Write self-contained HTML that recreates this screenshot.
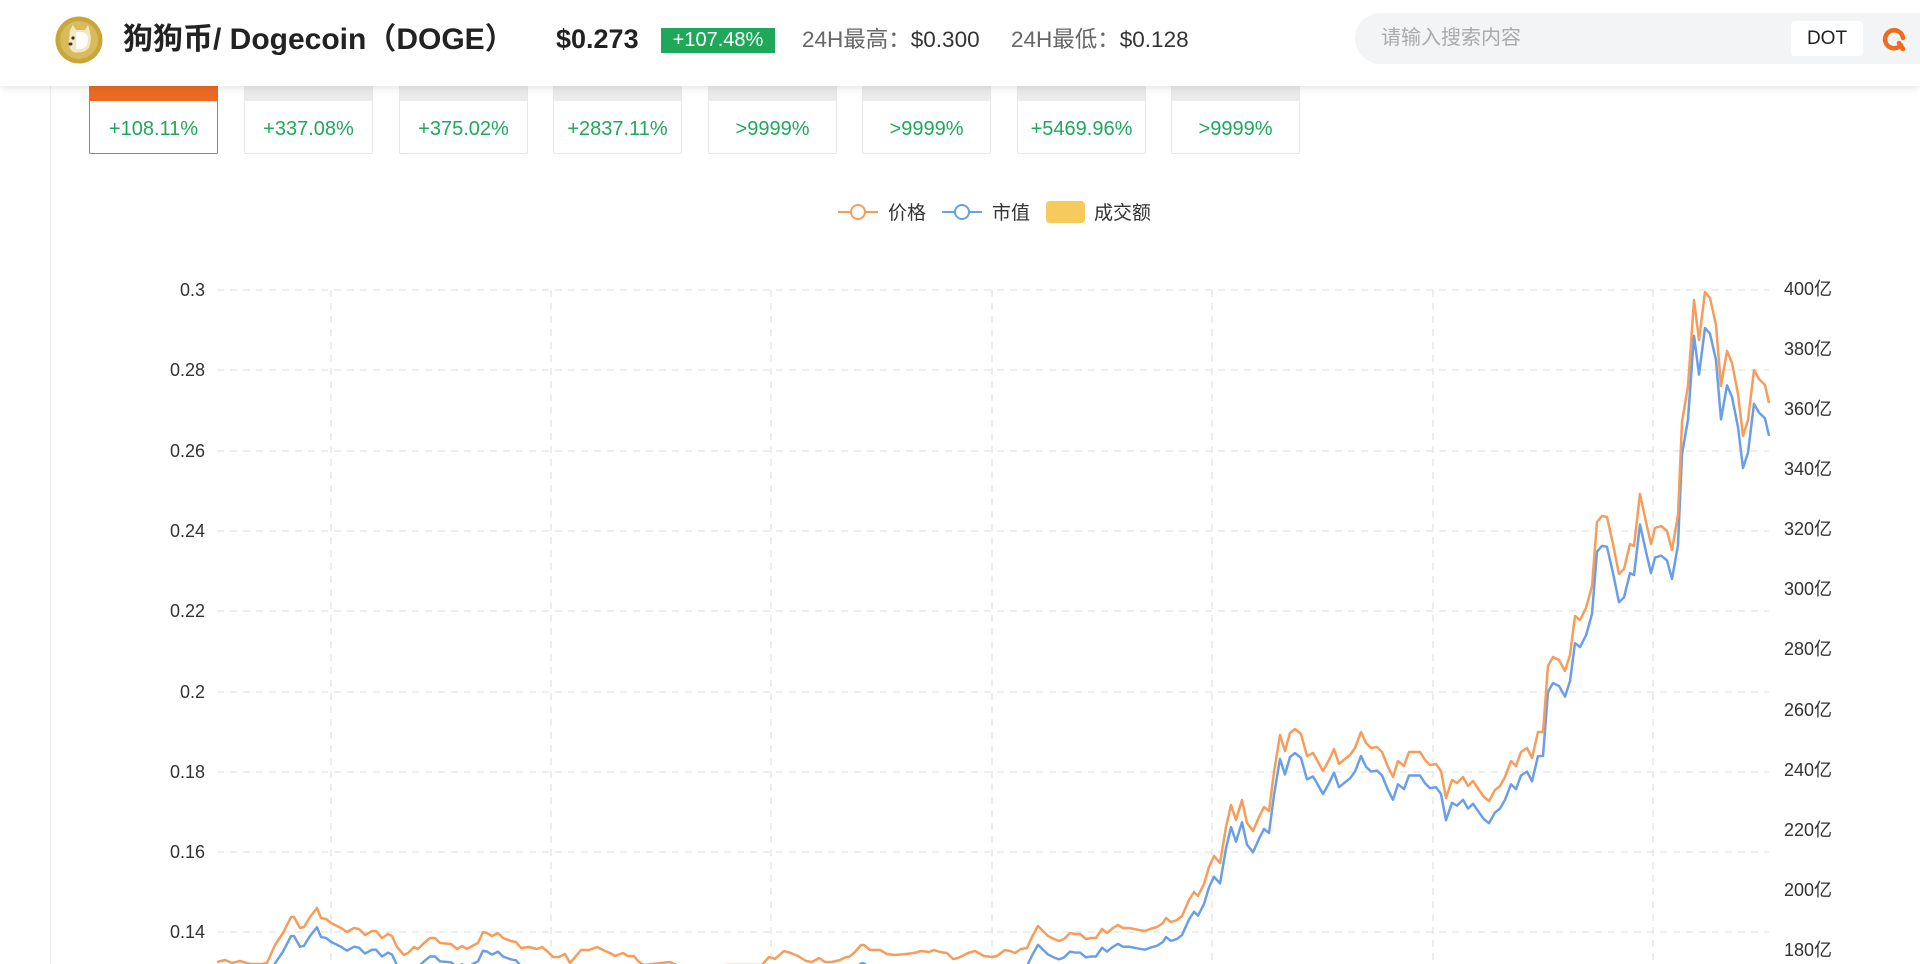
<!DOCTYPE html>
<html><head><meta charset="utf-8">
<style>
*{margin:0;padding:0;box-sizing:border-box}
body{width:1920px;height:964px;overflow:hidden;background:#fff;font-family:"Liberation Sans","Noto Sans CJK SC",sans-serif;position:relative}
.hdr{position:absolute;left:0;top:0;width:1920px;height:86px;background:#fff;box-shadow:0 3px 8px rgba(0,0,0,.09);z-index:5}
.abs{position:absolute;white-space:nowrap}
.card{position:absolute;top:60px;width:129px;height:94px;border:1px solid #e8e8e8;background:#fff;border-radius:2px}
.card .top{height:40px;background:#ebebeb}
.card .v{position:absolute;left:0;right:0;top:54px;text-align:center;font-size:20px;color:#1fa85a;line-height:28px}
.card.act{border-color:#ee6a22}
.card.act .top{background:#ee6a22}
</style></head><body>
<div class="abs" style="left:50px;top:80px;width:1px;height:884px;background:#ececec"></div>

<div class="card act" style="left:89px"><div class="top"></div><div class="v">+108.11%</div></div>
<div class="card" style="left:244px"><div class="top"></div><div class="v">+337.08%</div></div>
<div class="card" style="left:399px"><div class="top"></div><div class="v">+375.02%</div></div>
<div class="card" style="left:553px"><div class="top"></div><div class="v">+2837.11%</div></div>
<div class="card" style="left:708px"><div class="top"></div><div class="v">&gt;9999%</div></div>
<div class="card" style="left:862px"><div class="top"></div><div class="v">&gt;9999%</div></div>
<div class="card" style="left:1017px"><div class="top"></div><div class="v">+5469.96%</div></div>
<div class="card" style="left:1171px"><div class="top"></div><div class="v">&gt;9999%</div></div>

<div class="hdr">
  <svg class="abs" style="left:55px;top:16px" width="48" height="48" viewBox="0 0 48 48">
    <circle cx="24" cy="24" r="23.5" fill="#c9a53a"/>
    <circle cx="24" cy="24" r="19" fill="#d9bb5c"/>
    <path d="M15 14 L18 9 L21 14 L30 14 L33 9 L35 16 Q37 24 34 32 Q28 38 18 36 Q13 32 14 24 Z" fill="#f1e6c6"/>
    <path d="M21 16 H28 Q34 18 33 25 Q32 33 25 33 H21 Z" fill="#fff" opacity=".85"/>
    <circle cx="18" cy="22" r="1.6" fill="#333"/>
    <ellipse cx="15.5" cy="28" rx="2" ry="1.5" fill="#333"/>
  </svg>
  <div class="abs" style="left:123px;top:22px;font-size:30px;font-weight:bold;color:#222;line-height:36px">狗狗币/ Dogecoin（DOGE）</div>
  <div class="abs" style="left:556px;top:21px;font-size:27px;font-weight:bold;color:#222;line-height:36px">$0.273</div>
  <div class="abs" style="left:661px;top:28px;width:114px;height:25px;background:#1fa85a;color:#fff;font-size:20px;line-height:25px;text-align:center">+107.48%</div>
  <div class="abs" style="left:802px;top:26px;font-size:22.5px;color:#666;line-height:28px">24H最高：<span style="color:#333">$0.300</span></div>
  <div class="abs" style="left:1011px;top:26px;font-size:22.5px;color:#666;line-height:28px">24H最低：<span style="color:#333">$0.128</span></div>
  <div class="abs" style="left:1355px;top:13px;width:600px;height:51px;background:#f3f4f6;border-radius:26px"></div>
  <div class="abs" style="left:1381px;top:24px;font-size:20px;color:#aaa;line-height:28px">请输入搜索内容</div>
  <div class="abs" style="left:1791px;top:21px;width:72px;height:35px;background:#fff;border-radius:4px;font-size:19px;color:#222;line-height:35px;text-align:center">DOT</div>
  <svg class="abs" style="left:1882px;top:26px" width="28" height="26" viewBox="0 0 28 26">
    <path d="M19 19 A9 9 0 1 1 21 12" fill="none" stroke="#f26b1d" stroke-width="4.5" stroke-linecap="round"/>
    <path d="M17 17 L21 23" stroke="#f26b1d" stroke-width="4.5" stroke-linecap="round"/>
  </svg>
</div>

<svg class="abs" style="left:0;top:0" width="1920" height="964">
  <g font-family="Liberation Sans, Noto Sans CJK SC, sans-serif" font-size="19" fill="#333">
    <line x1="838" y1="212" x2="878" y2="212" stroke="#f79d5c" stroke-width="2"/>
    <circle cx="858" cy="212" r="7" fill="#fff" stroke="#f79d5c" stroke-width="2"/>
    <text x="888" y="219">价格</text>
    <line x1="942" y1="212" x2="982" y2="212" stroke="#6a9ee8" stroke-width="2"/>
    <circle cx="962" cy="212" r="7" fill="#fff" stroke="#6a9ee8" stroke-width="2"/>
    <text x="992" y="219">市值</text>
    <rect x="1046" y="201" width="39" height="22" rx="4" fill="#f7cb5b"/>
    <text x="1094" y="219">成交额</text>
  </g>
  <g stroke="#e3e3e3" stroke-width="1.3" stroke-dasharray="7,6">
    <line x1="217" y1="290" x2="1769" y2="290"/>
    <line x1="217" y1="370" x2="1769" y2="370"/>
    <line x1="217" y1="451" x2="1769" y2="451"/>
    <line x1="217" y1="531" x2="1769" y2="531"/>
    <line x1="217" y1="611" x2="1769" y2="611"/>
    <line x1="217" y1="692" x2="1769" y2="692"/>
    <line x1="217" y1="772" x2="1769" y2="772"/>
    <line x1="217" y1="852" x2="1769" y2="852"/>
    <line x1="217" y1="932" x2="1769" y2="932"/>
    <line x1="331" y1="290" x2="331" y2="964"/>
    <line x1="551" y1="290" x2="551" y2="964"/>
    <line x1="771" y1="290" x2="771" y2="964"/>
    <line x1="992" y1="290" x2="992" y2="964"/>
    <line x1="1212" y1="290" x2="1212" y2="964"/>
    <line x1="1433" y1="290" x2="1433" y2="964"/>
    <line x1="1653" y1="290" x2="1653" y2="964"/>
  </g>
  <g font-family="Liberation Sans, Noto Sans CJK SC, sans-serif" font-size="18" fill="#333" text-anchor="end">
    <text x="205" y="296">0.3</text>
    <text x="205" y="376">0.28</text>
    <text x="205" y="457">0.26</text>
    <text x="205" y="537">0.24</text>
    <text x="205" y="617">0.22</text>
    <text x="205" y="698">0.2</text>
    <text x="205" y="778">0.18</text>
    <text x="205" y="858">0.16</text>
    <text x="205" y="938">0.14</text>
  </g>
  <g font-family="Liberation Sans, Noto Sans CJK SC, sans-serif" font-size="18" fill="#333">
    <text x="1784" y="295">400亿</text>
    <text x="1784" y="355">380亿</text>
    <text x="1784" y="415">360亿</text>
    <text x="1784" y="475">340亿</text>
    <text x="1784" y="535">320亿</text>
    <text x="1784" y="595">300亿</text>
    <text x="1784" y="655">280亿</text>
    <text x="1784" y="716">260亿</text>
    <text x="1784" y="776">240亿</text>
    <text x="1784" y="836">220亿</text>
    <text x="1784" y="896">200亿</text>
    <text x="1784" y="956">180亿</text>
  </g>
  <defs>
    <polyline id="ln" fill="none" points="217,962 225,960 232,963 240,961 250,964 262,964 267,963 275,945 283,933 291,917 294,917 300,928 304,927 310,917 317,908 321,918 326,919 331,923 341,928 347,932 354,928 359,929 365,935 372,931 376,931 382,938 388,934 392,936 397,947 404,955 408,953 414,947 418,949 424,943 430,938 435,938 440,943 451,944 457,949 462,946 467,949 474,945 478,943 483,932 487,933 492,936 498,933 503,938 511,941 516,942 521,948 529,947 537,949 542,947 547,951 553,957 559,957 565,954 570,963 576,956 581,950 589,950 597,947 603,950 610,953 615,956 623,953 628,956 634,956 639,962 644,965 670,962 681,967 728,965 762,965 769,957 775,959 784,951 791,953 798,956 806,961 812,962 819,958 825,962 832,962 840,960 846,957 849,957 854,953 861,945 864,945 870,950 880,950 887,954 895,955 906,954 914,953 921,951 929,952 934,950 940,952 947,953 953,959 958,958 968,953 975,951 984,956 992,957 997,956 1005,950 1010,951 1015,953 1021,949 1027,948 1032,937 1038,926 1043,931 1048,936 1054,939 1059,941 1064,939 1070,933 1075,934 1080,934 1086,939 1091,938 1096,938 1102,929 1107,933 1113,928 1118,925 1123,928 1129,928 1134,929 1139,930 1145,931 1150,929 1157,927 1163,923 1166,918 1171,922 1177,920 1182,916 1189,900 1194,892 1198,896 1204,884 1209,867 1214,856 1220,863 1226,827 1231,805 1236,820 1242,800 1247,823 1253,831 1259,817 1264,807 1269,811 1274,772 1280,735 1285,751 1290,733 1295,729 1301,734 1307,756 1313,753 1317,760 1323,771 1329,760 1334,749 1339,764 1345,759 1350,755 1355,748 1361,732 1366,743 1371,748 1377,747 1382,752 1388,767 1393,777 1398,761 1404,766 1409,752 1414,752 1420,752 1425,760 1430,765 1436,764 1441,771 1446,798 1452,780 1457,783 1463,777 1468,786 1473,781 1479,790 1484,797 1489,801 1495,790 1500,786 1505,777 1511,761 1516,766 1521,752 1527,748 1532,758 1538,732 1543,732 1548,666 1553,657 1559,660 1565,671 1570,655 1575,616 1580,620 1586,608 1592,586 1597,522 1602,516 1607,517 1613,544 1619,574 1624,569 1630,544 1634,546 1640,494 1646,522 1651,544 1655,528 1661,526 1667,531 1672,550 1678,515 1682,422 1688,386 1694,300 1699,340 1705,292 1710,298 1716,325 1721,386 1727,351 1732,363 1738,394 1743,436 1748,420 1754,370 1759,379 1765,385 1769,403"/>
  </defs>
  <g transform="matrix(1 0 0 0.973 0 43.8)">
    <use href="#ln" stroke="#6a9ee8" stroke-width="2.5" stroke-linejoin="round"/>
  </g>
  <use href="#ln" stroke="#f79d5c" stroke-width="2.5" stroke-linejoin="round"/>
</svg>
</body></html>
